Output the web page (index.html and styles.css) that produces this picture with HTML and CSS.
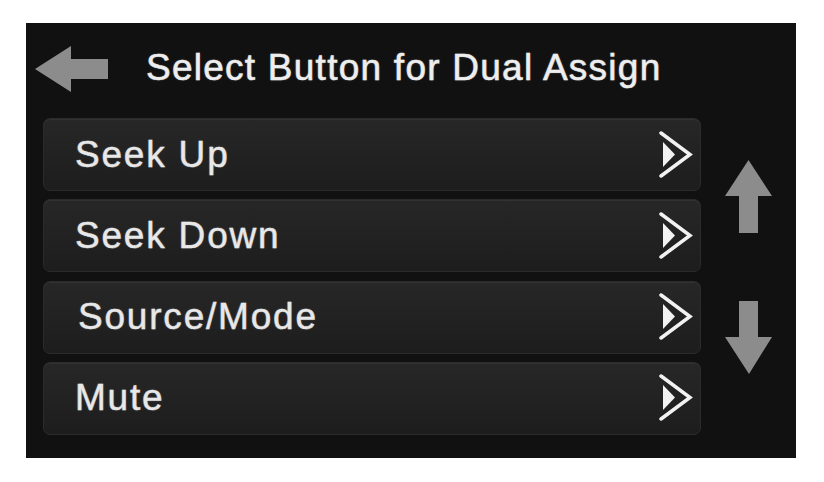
FILE: index.html
```html
<!DOCTYPE html>
<html>
<head>
<meta charset="utf-8">
<link rel="stylesheet" href="styles.css">
</head>
<body>
<div class="screen">
  <div class="header">
    <svg class="back" width="74" height="48" viewBox="0 0 74 48"><path d="M0 23 L36 0 L36 13 L73 13 L73 33 L36 33 L36 46 Z" fill="#8c8c8c"/></svg>
    <div class="title">Select Button for Dual Assign</div>
  </div>
  <div class="body">
    <div class="list">
      <div class="item"><span class="label">Seek Up</span><svg class="chev" width="34" height="48" viewBox="0 0 34 48"><path d="M2 2 L31 23.5 L2 45" fill="none" stroke="#f2f2f2" stroke-width="3.5" stroke-linejoin="miter" stroke-linecap="round"/><path d="M4 11 L16 23.5 L4 36 Z" fill="#f2f2f2"/></svg></div>
      <div class="item"><span class="label">Seek Down</span><svg class="chev" width="34" height="48" viewBox="0 0 34 48"><path d="M2 2 L31 23.5 L2 45" fill="none" stroke="#f2f2f2" stroke-width="3.5" stroke-linejoin="miter" stroke-linecap="round"/><path d="M4 11 L16 23.5 L4 36 Z" fill="#f2f2f2"/></svg></div>
      <div class="item"><span class="label shift">Source/Mode</span><svg class="chev" width="34" height="48" viewBox="0 0 34 48"><path d="M2 2 L31 23.5 L2 45" fill="none" stroke="#f2f2f2" stroke-width="3.5" stroke-linejoin="miter" stroke-linecap="round"/><path d="M4 11 L16 23.5 L4 36 Z" fill="#f2f2f2"/></svg></div>
      <div class="item"><span class="label">Mute</span><svg class="chev" width="34" height="48" viewBox="0 0 34 48"><path d="M2 2 L31 23.5 L2 45" fill="none" stroke="#f2f2f2" stroke-width="3.5" stroke-linejoin="miter" stroke-linecap="round"/><path d="M4 11 L16 23.5 L4 36 Z" fill="#f2f2f2"/></svg></div>
    </div>
    <div class="scroll">
      <svg width="48" height="74" viewBox="0 0 48 74"><path d="M23.5 0 L47 36 L33 36 L33 73 L14 73 L14 36 L0 36 Z" fill="#8c8c8c"/></svg>
      <svg width="48" height="74" viewBox="0 0 48 74"><path d="M14 0 L33 0 L33 36 L47 36 L24 73 L0 36 L14 36 Z" fill="#8c8c8c"/></svg>
    </div>
  </div>
</div>
</body>
</html>
```
FILE: styles.css
```css
html, body {
  margin: 0;
  padding: 0;
  background: #ffffff;
}
.screen {
  box-sizing: border-box;
  margin: 23px 0 0 26px;
  width: 770px;
  height: 435px;
  background: #111111;
  font-family: "Liberation Sans", Arial, sans-serif;
  color: #ececec;
}
.header {
  height: 95px;
  display: flex;
  align-items: center;
  padding-left: 9px;
  padding-bottom: 2px;
  box-sizing: border-box;
}
.back {
  display: block;
}
.title {
  margin-left: 37px;
  margin-bottom: 4px;
  font-size: 37px;
  letter-spacing: 1.25px;
  color: #eeeeee;
  -webkit-text-stroke: 0.5px #eeeeee;
  text-shadow: 0 0 2px rgba(255,255,255,0.35);
}
.body {
  display: flex;
  padding-left: 17px;
}
.list {
  width: 658px;
  display: flex;
  flex-direction: column;
  gap: 8.3px;
}
.item {
  box-sizing: border-box;
  height: 73px;
  border-radius: 7px;
  background: linear-gradient(#272727, #1d1d1d);
  border: 1px solid #2b2b2b;
  box-shadow: inset 0 1px 0 rgba(255,255,255,0.05);
  display: flex;
  align-items: center;
  justify-content: space-between;
  padding: 0 7px 0 31px;
}
.label {
  font-size: 37px;
  letter-spacing: 1.8px;
  color: #e8e8e8;
  -webkit-text-stroke: 0.4px #e8e8e8;
  text-shadow: 0 0 2px rgba(255,255,255,0.3);
}
.label.shift {
  margin-left: 3px;
}
.chev {
  display: block;
}
.scroll {
  flex: 1;
  display: flex;
  flex-direction: column;
  align-items: center;
  padding-top: 42px;
  gap: 67px;
}
.scroll svg {
  display: block;
}
```
